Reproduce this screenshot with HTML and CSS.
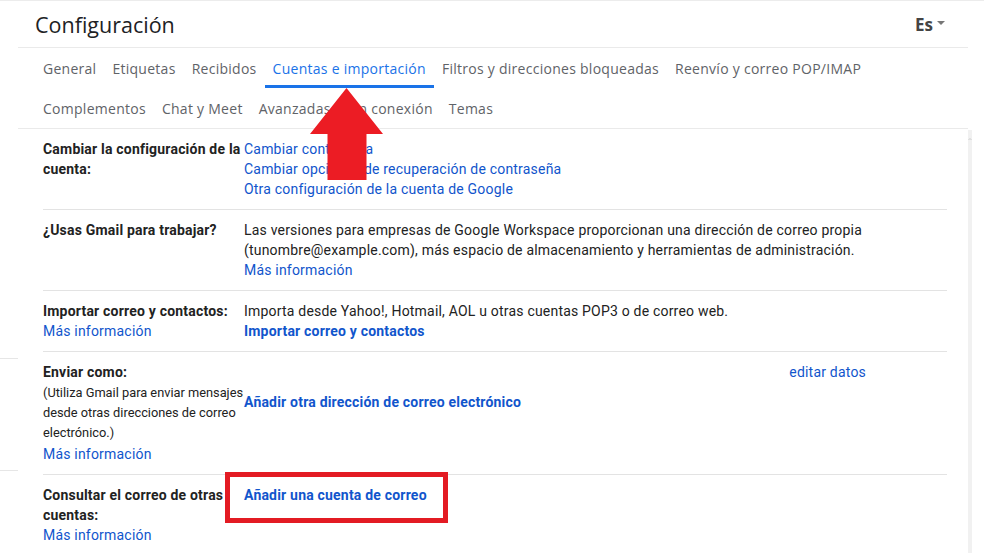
FILE: index.html
```html
<!DOCTYPE html>
<html lang="es">
<head>
<meta charset="utf-8">
<title>Configuración</title>
<link rel="stylesheet" href="styles.css">
</head>
<body>
<div class="page">
  <aside class="sidebar">
    <div class="sb-line sb-first"></div>
    <div class="sb-line sb-second"></div>
  </aside>
  <main class="settings">
    <header class="settings-head">
      <h1 class="title">Configuración</h1>
      <div class="lang">Es <span class="caret"></span></div>
    </header>
    <nav class="tabs">
      <a class="tab">General</a>
      <a class="tab">Etiquetas</a>
      <a class="tab">Recibidos</a>
      <a class="tab active">Cuentas e importación</a>
      <a class="tab">Filtros y direcciones bloqueadas</a>
      <a class="tab">Reenvío y correo POP/IMAP</a>
      <a class="tab">Complementos</a>
      <a class="tab">Chat y Meet</a>
      <a class="tab">Avanzadas</a>
      <a class="tab">Sin conexión</a>
      <a class="tab">Temas</a>
    </nav>
    <section class="rows">
      <div class="row">
        <div class="label"><b>Cambiar la configuración de la cuenta:</b></div>
        <div class="value">
          <a class="link">Cambiar contraseña</a>
          <a class="link">Cambiar opciones de recuperación de contraseña</a>
          <a class="link">Otra configuración de la cuenta de Google</a>
        </div>
      </div>
      <div class="row">
        <div class="label"><b>¿Usas Gmail para trabajar?</b></div>
        <div class="value">
          <p class="text">Las versiones para empresas de Google Workspace proporcionan una dirección de correo propia (tunombre@example.com), más espacio de almacenamiento y herramientas de administración.</p>
          <a class="link">Más información</a>
        </div>
      </div>
      <div class="row">
        <div class="label"><b>Importar correo y contactos:</b>
          <a class="link">Más información</a>
        </div>
        <div class="value">
          <p class="text">Importa desde Yahoo!, Hotmail, AOL u otras cuentas POP3 o de correo web.</p>
          <a class="link strong">Importar correo y contactos</a>
        </div>
      </div>
      <div class="row">
        <div class="label"><b>Enviar como:</b>
          <p class="note">(Utiliza Gmail para enviar mensajes desde otras direcciones de correo electrónico.)</p>
          <a class="link">Más información</a>
        </div>
        <div class="value">
          <div class="addr-line"><a class="link">editar datos</a></div>
          <a class="link strong add-addr">Añadir otra dirección de correo electrónico</a>
        </div>
      </div>
      <div class="row">
        <div class="label"><b>Consultar el correo de otras cuentas:</b>
          <a class="link">Más información</a>
        </div>
        <div class="value">
          <a class="link strong">Añadir una cuenta de correo</a>
        </div>
      </div>
    </section>
  </main>
  <div class="scroll-col">
    <div class="scrollbar">
      <svg class="scroll-up" width="8" height="6" viewBox="0 0 8 6"><path d="M1 5 L4 2 L7 5" fill="none" stroke="#b5b5b5" stroke-width="1.2"/></svg>
    </div>
  </div>
</div>
<svg class="arrow" width="74" height="93" viewBox="0 0 74 93"><polygon points="36.5,0 73,46 56.5,46 56.5,92 17.5,92 17.5,46 0,46" fill="#ec1c24"/></svg>
<div class="highlight"></div>
</body>
</html>
```

FILE: styles.css
```css
* { box-sizing: border-box; }
html, body { margin: 0; padding: 0; background: #fff; }
body {
  width: 984px;
  height: 553px;
  overflow: hidden;
  position: relative;
  font-family: Roboto, "Liberation Sans", Arial, sans-serif;
  font-size: 14px;
  color: #222;
}
.page {
  display: grid;
  grid-template-columns: 18px 950px 4px 12px;
  height: 553px;
  border-top: 1px solid #ececec;
}
.sidebar { padding-top: 357px; }
.sb-line { height: 1px; background: #e6e6e6; }
.sb-second { margin-top: 111px; }

.settings { display: flex; flex-direction: column; }
.settings-head {
  height: 47px;
  display: flex;
  align-items: center;
  justify-content: space-between;
  padding: 0 23px 0 17px;
  border-bottom: 1px solid #eaeaea;
}
.title {
  margin: 0;
  font-family: "Open Sans", sans-serif;
  font-weight: 400;
  font-size: 21.5px;
  color: #202124;
}
.lang {
  font-family: "Open Sans", sans-serif;
  font-weight: 700;
  font-size: 17px;
  color: #444;
  display: flex;
  align-items: center;
  gap: 4px;
}
.caret {
  width: 0; height: 0;
  border-left: 4px solid transparent;
  border-right: 4px solid transparent;
  border-top: 4px solid #777;
  margin-top: -3px;
}
.tabs {
  display: flex;
  flex-wrap: wrap;
  padding-left: 17px;
  border-bottom: 1px solid #eaeaea;
}
.tab {
  height: 40px;
  padding: 3px 8px 0;
  display: flex;
  align-items: center;
  font-family: "Open Sans", sans-serif;
  font-size: 14px;
  letter-spacing: 0.27px;
  color: #5f6368;
  border-bottom: 3px solid transparent;
}
.tab.active { color: #1a73e8; border-bottom-color: #1a73e8; }

.rows { padding: 0 21px 0 25px; }
.row {
  display: grid;
  grid-template-columns: 201px 1fr;
  padding: 10px 0;
  border-bottom: 1px solid #e3e3e3;
  line-height: 20px;
  letter-spacing: 0.2px;
}
.label b { font-weight: 700; display: block; }
.label .link { display: block; }
.value .link { display: block; }
.link { color: #1155cc; text-decoration: none; }
.link.strong { font-weight: 700; }
.text { margin: 0; }
.note {
  margin: 1px 0;
  font-size: 12.8px;
  letter-spacing: 0;
  line-height: 20px;
  color: #222;
}
.addr-line { width: 622px; display: flex; justify-content: flex-end; }
.add-addr { margin-top: 10px; }

.scroll-col { padding-top: 129px; }
.scrollbar {
  height: 100%;
  background: #f1f1f1;
  display: flex;
  justify-content: center;
  padding-top: 6px;
}
.scroll-up { display: block; }

.arrow { position: absolute; left: 310px; top: 88px; }
.highlight {
  position: absolute;
  left: 225px; top: 472px;
  width: 223px; height: 51px;
  border: 5px solid #e31b23;
}
```
